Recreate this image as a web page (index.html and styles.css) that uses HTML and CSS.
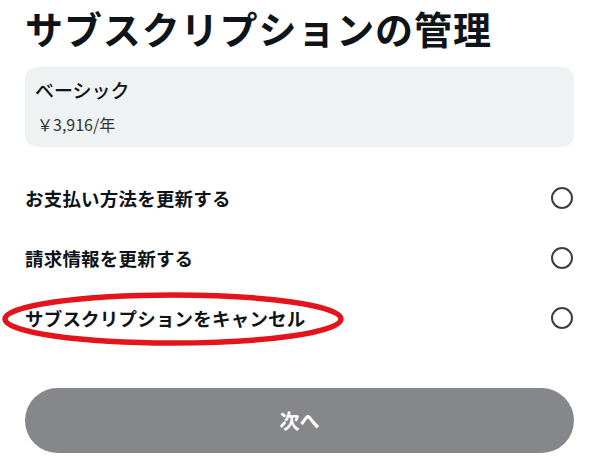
FILE: index.html
```html
<!DOCTYPE html>
<html lang="ja">
<head>
<meta charset="utf-8">
<link rel="stylesheet" href="styles.css">
</head>
<body>
<main class="page">
  <h1 class="title">サブスクリプションの管理</h1>
  <section class="plan">
    <div class="plan-name">ベーシック</div>
    <div class="plan-price">￥3,916/年</div>
  </section>
  <ul class="options">
    <li class="option"><span class="label">お支払い方法を更新する</span><span class="radio"></span></li>
    <li class="option"><span class="label">請求情報を更新する</span><span class="radio"></span></li>
    <li class="option highlighted"><span class="label">サブスクリプションをキャンセル</span><span class="radio"></span>
      <svg class="circle-mark" width="344" height="58" viewBox="0 0 344 58"><ellipse cx="172" cy="29" rx="168" ry="24" fill="none" stroke="#e3141c" stroke-width="5.5"/></svg>
    </li>
  </ul>
  <button class="next">次へ</button>
</main>
</body>
</html>
```
FILE: styles.css
```css
* { box-sizing: border-box; }
html, body { margin: 0; padding: 0; background: #fff; }
body {
  font-family: "Noto Sans CJK JP", "Noto Sans", sans-serif;
  color: #0f1419;
}
.page {
  width: 549px;
  margin-left: 25px;
  display: flex;
  flex-direction: column;
}
.title {
  margin: 0;
  font-size: 38px;
  line-height: 56px;
  font-weight: 700;
  letter-spacing: 0.9px;
}
.plan {
  margin-top: 11px;
  height: 80px;
  background: #eff2f3;
  border-radius: 12px;
  padding: 9px 10px 0;
}
.plan-name {
  font-size: 19px;
  line-height: 28px;
  font-weight: 500;
}
.plan-price {
  margin-top: 9px;
  font-size: 16px;
  line-height: 22px;
  color: #333;
  padding-left: 2px;
}
.options {
  list-style: none;
  margin: 21px 0 0;
  padding: 0;
}
.option {
  position: relative;
  height: 60px;
  display: flex;
  align-items: center;
  justify-content: space-between;
}
.label {
  font-size: 18.5px;
  font-weight: 700;
  letter-spacing: 0.2px;
}
.radio {
  width: 22px;
  height: 22px;
  border: 2px solid #3c4043;
  border-radius: 50%;
  margin-right: 1px;
}
.circle-mark {
  position: absolute;
  left: -24px;
  top: 2px;
}
.next {
  margin-top: 40px;
  height: 65px;
  border: none;
  border-radius: 33px;
  background: #86878b;
  color: #fff;
  font-family: inherit;
  font-size: 20px;
  font-weight: 700;
}
```
